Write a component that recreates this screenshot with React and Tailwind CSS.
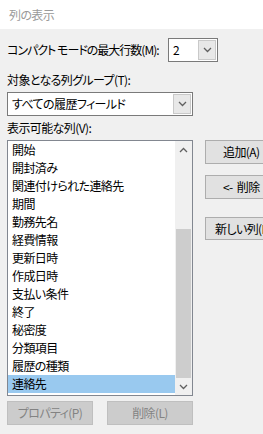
const font = {
  fontFamily: '"Noto Sans CJK JP", "Liberation Sans", sans-serif',
};

const items = [
  "開始",
  "開封済み",
  "関連付けられた連絡先",
  "期間",
  "勤務先名",
  "経費情報",
  "更新日時",
  "作成日時",
  "支払い条件",
  "終了",
  "秘密度",
  "分類項目",
  "履歴の種類",
  "連絡先",
];

function Chevron({ up = false }) {
  return (
    <svg width="9" height="6" viewBox="0 0 9 6">
      <path
        d={up ? "M1 5 L4.5 1.5 L8 5" : "M1 1 L4.5 4.5 L8 1"}
        fill="none"
        stroke="#606060"
        strokeWidth="1.3"
      />
    </svg>
  );
}

function DropButton() {
  return (
    <div className="w-[18px] h-[20px] mr-[1px] border border-[#c9c9c9] bg-[#e8e8e8] flex items-center justify-center">
      <Chevron />
    </div>
  );
}

export default function App() {
  return (
    <div
      className="w-[263px] h-[434px] overflow-hidden bg-[#f0f0f0] text-[12px] leading-[18px] tracking-[-0.6px] text-black whitespace-nowrap [font-feature-settings:'palt']"
      style={font}
    >
      <div className="h-[29px] bg-white pl-[9px] pt-[6px] text-[#9a9a9a]">
        列の表示
      </div>

      <div className="px-[7px]">
        <div className="flex items-center mt-[9px] h-[24px]">
          <span className="w-[161px] shrink-0 tracking-[-1px]">
            コンパクト モードの最大行数(M):
          </span>
          <div className="w-[50px] h-[24px] shrink-0 border border-[#7a7a7a] bg-white flex items-center justify-between pl-[4px]">
            <span>2</span>
            <DropButton />
          </div>
        </div>

        <div className="mt-[9px] h-[18px]">対象となる列グループ(T):</div>

        <div className="mt-[3px] w-[186px] h-[24px] border border-[#7a7a7a] bg-white flex items-center justify-between pl-[4px]">
          <span>すべての履歴フィールド</span>
          <DropButton />
        </div>

        <div className="mt-[3px] h-[18px]">表示可能な列(V):</div>

        <div className="mt-[3px] flex items-start">
          <div className="w-[186px] h-[256px] shrink-0 border border-[#828790] bg-white flex">
            <div className="flex-1 flex flex-col">
              {items.map((it, i) => (
                <div
                  key={it}
                  className={
                    "h-[18px] pl-[4px] " +
                    (i === items.length - 1 ? "bg-[#99c9ef]" : "")
                  }
                >
                  {it}
                </div>
              ))}
            </div>
            <div className="w-[17px] bg-[#f0f0f0] flex flex-col">
              <div className="h-[17px] flex items-center justify-center">
                <Chevron up />
              </div>
              <div className="flex-1 flex flex-col px-[1px]">
                <div className="h-[71px]" />
                <div className="flex-1 bg-[#cdcdcd]" />
              </div>
              <div className="h-[17px] flex items-center justify-center">
                <Chevron />
              </div>
            </div>
          </div>

          <div className="ml-[12px] flex flex-col shrink-0">
            <div className="w-[80px] h-[24px] border border-[#adadad] bg-[#e1e1e1] pl-[17px] leading-[22px]">
              追加(A)
            </div>
            <div className="mt-[11px] w-[80px] h-[24px] border border-[#adadad] bg-[#e1e1e1] pl-[17px] leading-[22px]">
              &lt;-&nbsp;&nbsp;削除
            </div>
            <div className="mt-[18px] w-[80px] h-[23px] border border-[#adadad] bg-[#e1e1e1] pl-[9px] leading-[21px]">
              新しい列(N)...
            </div>
          </div>
        </div>

        <div className="mt-[5px] flex gap-[14px]">
          <div className="w-[86px] h-[24px] border border-[#bfbfbf] bg-[#cccccc] text-[#838383] flex items-center justify-center">
            プロパティ(P)
          </div>
          <div className="w-[86px] h-[24px] border border-[#bfbfbf] bg-[#cccccc] text-[#838383] flex items-center justify-center">
            削除(L)
          </div>
        </div>
      </div>
    </div>
  );
}
